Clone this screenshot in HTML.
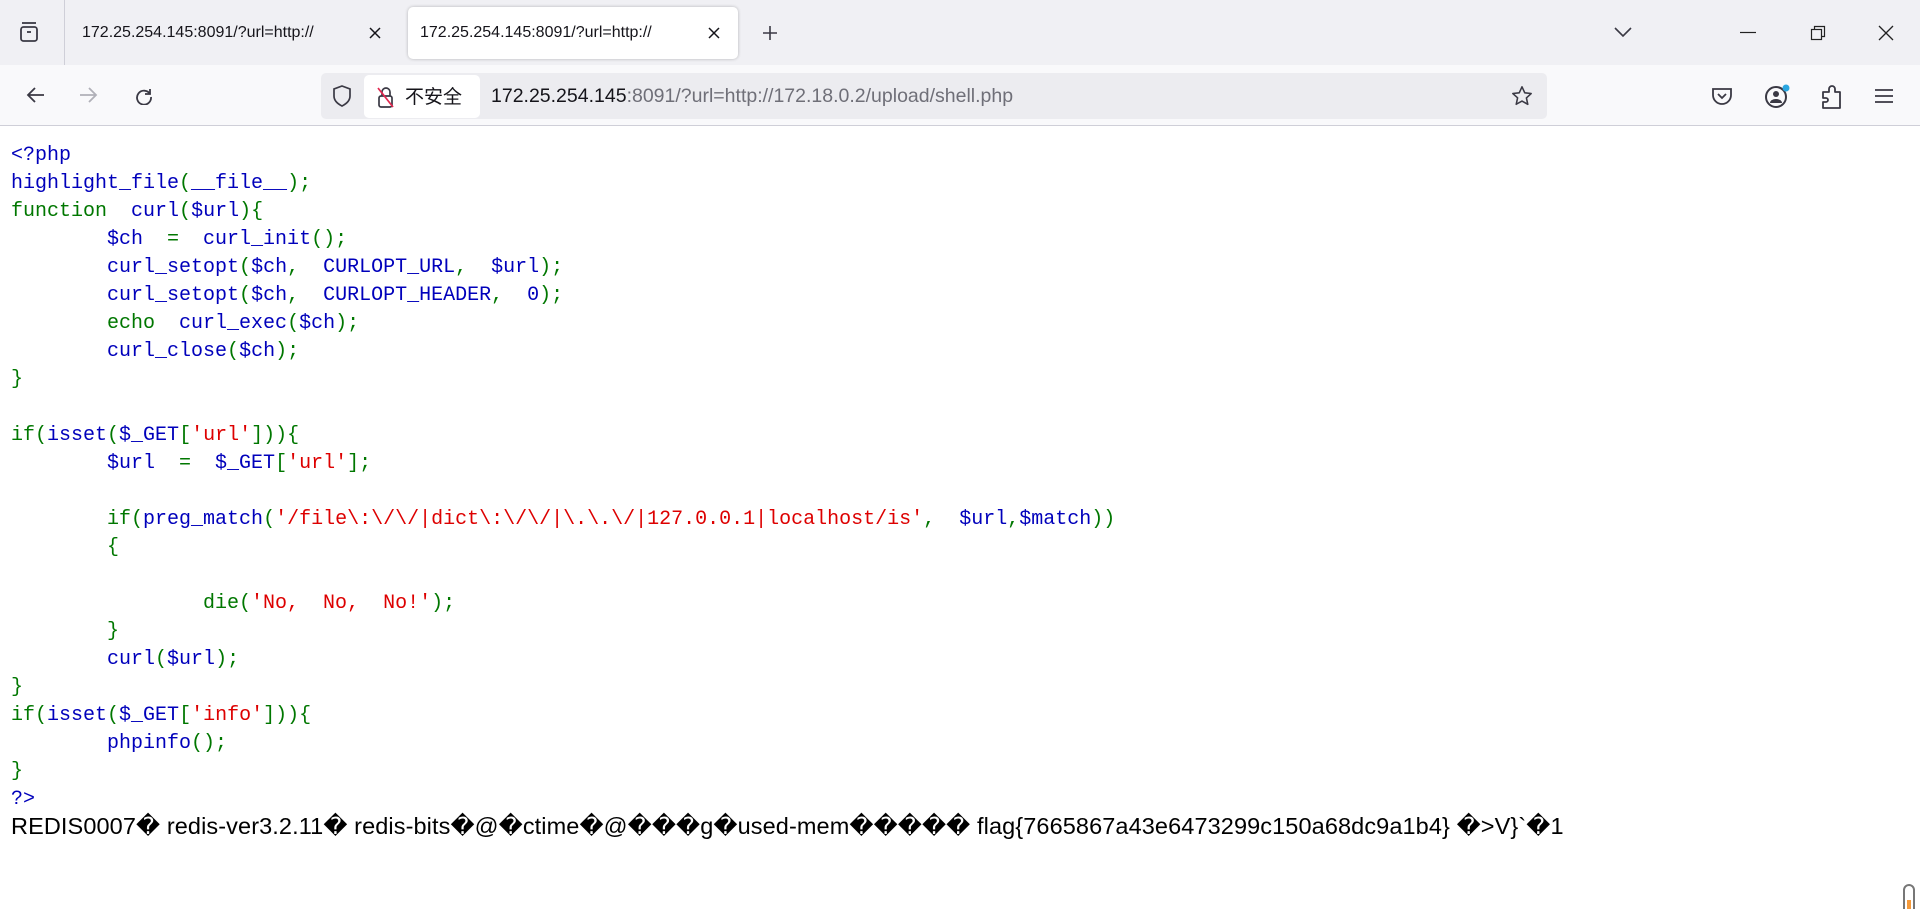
<!DOCTYPE html>
<html><head><meta charset="utf-8">
<style>
*{margin:0;padding:0;box-sizing:border-box}
html,body{width:1920px;height:909px;overflow:hidden;background:#fff;font-family:"Liberation Sans","Noto Sans CJK SC",sans-serif}
.tabbar{position:absolute;left:0;top:0;width:1920px;height:65px;background:#f0f0f4}
.nav{position:absolute;left:0;top:65px;width:1920px;height:61px;background:#f9f9fb;border-bottom:1px solid #cfcfd8}
.tab{position:absolute;top:7px;height:52px;font-size:16px;color:#15141a;line-height:52px}
.tab2{background:#fff;border-radius:5px;box-shadow:0 0 3px rgba(0,0,0,.25)}
svg{position:absolute}
.url{position:absolute;left:321px;top:73px;width:1226px;height:46px;background:#ececf0;border-radius:5px}
.pill{position:absolute;left:364px;top:75px;width:116px;height:43px;background:#fff;border-radius:5px}
.code{position:absolute;left:11px;top:142px;font-family:"Liberation Mono",monospace;font-size:20px;line-height:28px;white-space:pre;color:#0000BB}
.g{color:#007700}.r{color:#DD0000}.b{color:#0000BB}
.redis{position:absolute;left:11px;top:812px;font-size:23.5px;color:#000;white-space:pre;letter-spacing:0.1px}
</style></head><body>
<div class="tabbar">
<svg style="left:17px;top:20px" width="24" height="24" viewBox="0 0 24 24" fill="none" stroke="#3a3944" stroke-width="1.8"><path d="M5 3h14"/><rect x="4" y="7" width="16" height="14" rx="2.5"/><path d="M10 12h4"/></svg>
<div style="position:absolute;left:64px;top:0;width:1px;height:65px;background:#cfcfd8"></div>
<div class="tab" style="left:82px">172.25.254.145:8091/?url=http://</div>
<svg style="left:369px;top:27px" width="12" height="12" viewBox="0 0 12 12" stroke="#15141a" stroke-width="1.5"><path d="M1 1l10 10M11 1L1 11"/></svg>
<div class="tab tab2" style="left:408px;width:330px;padding-left:12px">172.25.254.145:8091/?url=http://</div>
<svg style="left:708px;top:27px" width="12" height="12" viewBox="0 0 12 12" stroke="#15141a" stroke-width="1.5"><path d="M1 1l10 10M11 1L1 11"/></svg>
<svg style="left:762px;top:25px" width="16" height="16" viewBox="0 0 16 16" stroke="#3a3944" stroke-width="1.6"><path d="M8 1v14M1 8h14"/></svg>
<svg style="left:1613px;top:26px" width="20" height="12" viewBox="0 0 20 12" fill="none" stroke="#3a3944" stroke-width="1.6"><path d="M2 2l8 8 8-8"/></svg>
<svg style="left:1740px;top:31px" width="16" height="3"><path d="M0 1.5h16" stroke="#222" stroke-width="1.2"/></svg>
<svg style="left:1810px;top:25px" width="16" height="16" viewBox="0 0 16 16" fill="none" stroke="#222" stroke-width="1.2"><rect x="1.5" y="4.5" width="10" height="10"/><path d="M4.5 4.5V1.5h10v10h-3"/></svg>
<svg style="left:1878px;top:25px" width="16" height="16" viewBox="0 0 16 16" stroke="#222" stroke-width="1.3"><path d="M1 1l14 14M15 1L1 15"/></svg>
</div>
<div class="nav">
<svg style="left:26px;top:20px" width="20" height="20" viewBox="0 0 20 20" fill="none" stroke="#3a3944" stroke-width="1.8"><path d="M18 10H3M9 3l-7 7 7 7"/></svg>
<svg style="left:78px;top:20px" width="20" height="20" viewBox="0 0 20 20" fill="none" stroke="#b0b0b8" stroke-width="1.8"><path d="M2 10h15M11 3l7 7-7 7"/></svg>
<svg style="left:134px;top:20px" width="20" height="20" viewBox="0 0 20 20" fill="none" stroke="#3a3944" stroke-width="1.8"><path d="M16 4v5h-5"/><path d="M16 9A7 7 0 1 0 17 12"/></svg>
</div>
<div class="url"></div>
<svg style="left:331px;top:84px" width="22" height="24" viewBox="0 0 22 24" fill="none" stroke="#3a3944" stroke-width="1.7"><path d="M11 2l8 3v7c0 5-4 8-8 10-4-2-8-5-8-10V5z"/></svg>
<div class="pill"></div>
<svg style="left:376px;top:85px" width="20" height="24" viewBox="0 0 20 24" fill="none" stroke="#3a3944" stroke-width="1.7"><rect x="3" y="11" width="13" height="11" rx="2"/><path d="M6 11V7a4 4 0 0 1 8 0v4"/><path d="M2 3l15 19" stroke="#e22850"/></svg>
<div style="position:absolute;left:405px;top:83px;font-size:19px;color:#15141a;font-family:'Noto Sans CJK SC',sans-serif;line-height:26px">不安全</div>
<div style="position:absolute;left:491px;top:84px;font-size:19.5px;color:#15141a;line-height:24px;white-space:pre">172.25.254.145<span style="color:#6f6f78">:8091/?url=http://172.18.0.2/upload/shell.php</span></div>
<svg style="left:1511px;top:85px" width="22" height="22" viewBox="0 0 24 24" fill="none" stroke="#3a3944" stroke-width="1.7" stroke-linejoin="round"><path d="M12 2l3 6.5 7 .8-5.2 4.8 1.5 7L12 17.5 5.7 21l1.5-7L2 9.3l7-.8z"/></svg>
<svg style="left:1711px;top:86px" width="22" height="20" viewBox="0 0 22 20" fill="none" stroke="#3a3944" stroke-width="1.8"><path d="M2 3h18v6a9 9 0 0 1-18 0z"/><path d="M7 8l4 4 4-4"/></svg>
<svg style="left:1764px;top:84px" width="30" height="26" viewBox="0 0 30 26" fill="none"><circle cx="12" cy="13" r="10" stroke="#3a3944" stroke-width="2"/><circle cx="12" cy="10" r="3" fill="#3a3944"/><path d="M6 19a6 4 0 0 1 12 0z" fill="#3a3944"/><circle cx="22" cy="4" r="3.5" fill="#2aa6e0"/></svg>
<svg style="left:1820px;top:84px" width="24" height="26" viewBox="0 0 24 26" fill="none" stroke="#3a3944" stroke-width="1.8" stroke-linejoin="round"><path d="M3 24v-6h3a2 2 0 0 0 0-4H3V8h6V5a3 3 0 0 1 6 0v3h5v16z"/></svg>
<svg style="left:1874px;top:88px" width="20" height="16" viewBox="0 0 20 16" stroke="#3a3944" stroke-width="1.8"><path d="M1 2h18M1 8h18M1 14h18"/></svg>

<div class="code"><span class="b">&lt;?php</span>
<span class="b">highlight_file</span><span class="g">(</span><span class="b">__file__</span><span class="g">);</span>
<span class="g">function  </span><span class="b">curl</span><span class="g">(</span><span class="b">$url</span><span class="g">){</span>
        <span class="b">$ch  </span><span class="g">=  </span><span class="b">curl_init</span><span class="g">();</span>
        <span class="b">curl_setopt</span><span class="g">(</span><span class="b">$ch</span><span class="g">,  </span><span class="b">CURLOPT_URL</span><span class="g">,  </span><span class="b">$url</span><span class="g">);</span>
        <span class="b">curl_setopt</span><span class="g">(</span><span class="b">$ch</span><span class="g">,  </span><span class="b">CURLOPT_HEADER</span><span class="g">,  </span><span class="b">0</span><span class="g">);</span>
        <span class="g">echo  </span><span class="b">curl_exec</span><span class="g">(</span><span class="b">$ch</span><span class="g">);</span>
        <span class="b">curl_close</span><span class="g">(</span><span class="b">$ch</span><span class="g">);</span>
<span class="g">}</span>

<span class="g">if(</span><span class="b">isset</span><span class="g">(</span><span class="b">$_GET</span><span class="g">[</span><span class="r">'url'</span><span class="g">])){</span>
        <span class="b">$url  </span><span class="g">=  </span><span class="b">$_GET</span><span class="g">[</span><span class="r">'url'</span><span class="g">];</span>

        <span class="g">if(</span><span class="b">preg_match</span><span class="g">(</span><span class="r">'/file\:\/\/|dict\:\/\/|\.\.\/|127.0.0.1|localhost/is'</span><span class="g">,  </span><span class="b">$url</span><span class="g">,</span><span class="b">$match</span><span class="g">))</span>
        <span class="g">{</span>

                <span class="g">die(</span><span class="r">'No,  No,  No!'</span><span class="g">);</span>
        <span class="g">}</span>
        <span class="b">curl</span><span class="g">(</span><span class="b">$url</span><span class="g">);</span>
<span class="g">}</span>
<span class="g">if(</span><span class="b">isset</span><span class="g">(</span><span class="b">$_GET</span><span class="g">[</span><span class="r">'info'</span><span class="g">])){</span>
        <span class="b">phpinfo</span><span class="g">();</span>
<span class="g">}</span>
<span class="b">?&gt;</span></div>
<div class="redis">REDIS0007� redis-ver3.2.11� redis-bits�@�ctime�@���g�used-mem����� flag{7665867a43e6473299c150a68dc9a1b4} �&gt;V}`�1</div>
<svg style="left:1902px;top:882px" width="14" height="27" viewBox="0 0 14 27" fill="none"><path d="M2 27V8a5 5 0 0 1 10 0v19" stroke="#777" stroke-width="2"/><rect x="5" y="18" width="4" height="9" fill="#f59a3a"/></svg>
</body></html>
